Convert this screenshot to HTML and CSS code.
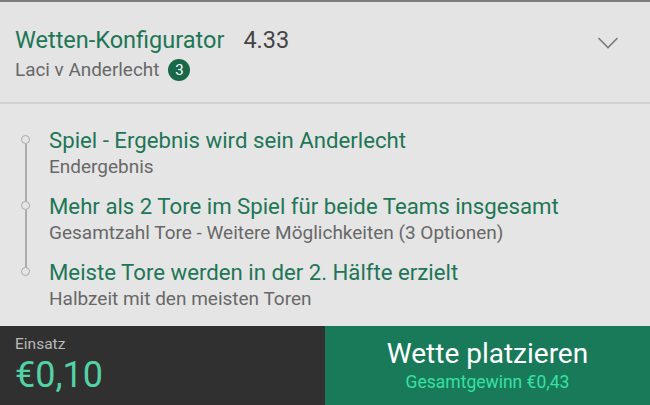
FILE: index.html
```html
<!DOCTYPE html>
<html lang="de">
<head>
	<meta charset="UTF-8">
	<title>Wetten-Konfigurator</title>
	<link rel="stylesheet" href="styles.css">
</head>
<body>
	<div class="header">
		<div class="header-text">
			<div class="header-title">
				<span class="title">Wetten-Konfigurator</span>
				<span class="odds">4.33</span>
			</div>
			<div class="header-sub">
				<span>Laci v Anderlecht</span>
				<span class="badge">3</span>
			</div>
		</div>
		<svg class="chevron" width="22" height="14" viewBox="0 0 22 14">
			<polyline points="1.5,2 11,11.5 20.5,2" fill="none" stroke="#7a7a7a" stroke-width="1.6"/>
		</svg>
	</div>

	<div class="legs">
		<div class="leg">
			<div class="leg-title">Spiel - Ergebnis wird sein Anderlecht</div>
			<div class="leg-sub">Endergebnis</div>
		</div>
		<div class="leg">
			<div class="leg-title">Mehr als 2 Tore im Spiel für beide Teams insgesamt</div>
			<div class="leg-sub">Gesamtzahl Tore - Weitere Möglichkeiten (3 Optionen)</div>
		</div>
		<div class="leg last">
			<div class="leg-title">Meiste Tore werden in der 2. Hälfte erzielt</div>
			<div class="leg-sub">Halbzeit mit den meisten Toren</div>
		</div>
	</div>

	<div class="footer">
		<div class="stake">
			<div class="stake-label">Einsatz</div>
			<div class="stake-value">€0,10</div>
		</div>
		<button class="place-bet">
			<span class="place-label">Wette platzieren</span>
			<span class="place-win">Gesamtgewinn €0,43</span>
		</button>
	</div>
</body>
</html>
```

FILE: styles.css
```css
body {
	font-family: Roboto, "Noto Sans", sans-serif;
	margin: 0;
	padding: 0;
	width: 650px;
	height: 405px;
	background-color: #e5e5e5;
	display: flex;
	flex-direction: column;
	overflow: hidden;
}

.header {
	display: flex;
	align-items: flex-start;
	justify-content: space-between;
	height: 104px;
	flex-shrink: 0;
	box-sizing: border-box;
	border-top: 2px solid #7d7d7d;
	border-bottom: 2px solid #d2d2d2;
	background-color: #e4e4e4;
	padding: 25px 31px 0 15px;
}

.header-title {
	display: flex;
	align-items: baseline;
	gap: 19px;
	line-height: 27px;
}

	.header-title .title {
		font-size: 23.5px;
		color: #1d7655;
	}

	.header-title .odds {
		font-size: 23.5px;
		color: #454545;
	}

.header-sub {
	display: flex;
	align-items: center;
	gap: 9px;
	margin-top: 5px;
	font-size: 18.9px;
	line-height: 22px;
	color: #686868;
}

.badge {
	display: inline-flex;
	align-items: center;
	justify-content: center;
	width: 22px;
	height: 22px;
	border-radius: 50%;
	background-color: #18684a;
	color: #fff;
	font-size: 15px;
}

.chevron {
	margin-top: 9px;
}

.legs {
	flex: 1;
	padding: 23px 0 0 49px;
}

.leg {
	position: relative;
	height: 66px;
}

	/* timeline marker and line */
	.leg::before {
		content: "";
		position: absolute;
		left: -28px;
		top: 8px;
		width: 7px;
		height: 7px;
		border: 1.5px solid #a9a9a9;
		border-radius: 50%;
		background-color: #e5e5e5;
		z-index: 1;
	}

	.leg::after {
		content: "";
		position: absolute;
		left: -24px;
		top: 17px;
		width: 2px;
		height: 58px;
		background-color: #acacac;
	}

	.leg.last::after {
		display: none;
	}

.leg-title {
	font-size: 22.2px;
	line-height: 26px;
	color: #1d7655;
}

.leg-sub {
	font-size: 19px;
	line-height: 22px;
	margin-top: 3px;
	color: #686868;
}

.footer {
	display: flex;
	height: 79px;
	flex-shrink: 0;
}

.stake {
	width: 325px;
	background-color: #303030;
	padding: 9px 15px 0;
	box-sizing: border-box;
}

.stake-label {
	font-size: 15.5px;
	line-height: 18px;
	color: #b9b9b9;
}

.stake-value {
	font-size: 36px;
	line-height: 40px;
	margin-top: 2px;
	color: #52d3a4;
}

.place-bet {
	flex: 1;
	border: none;
	margin: 0;
	background-color: #197a5a;
	display: flex;
	flex-direction: column;
	align-items: center;
	padding: 12px 0 0;
	font-family: inherit;
	cursor: pointer;
}

.place-label {
	font-size: 28px;
	line-height: 32px;
	color: #ffffff;
}

.place-win {
	font-size: 17.5px;
	line-height: 20px;
	margin-top: 2px;
	color: #38e0a2;
}
```
